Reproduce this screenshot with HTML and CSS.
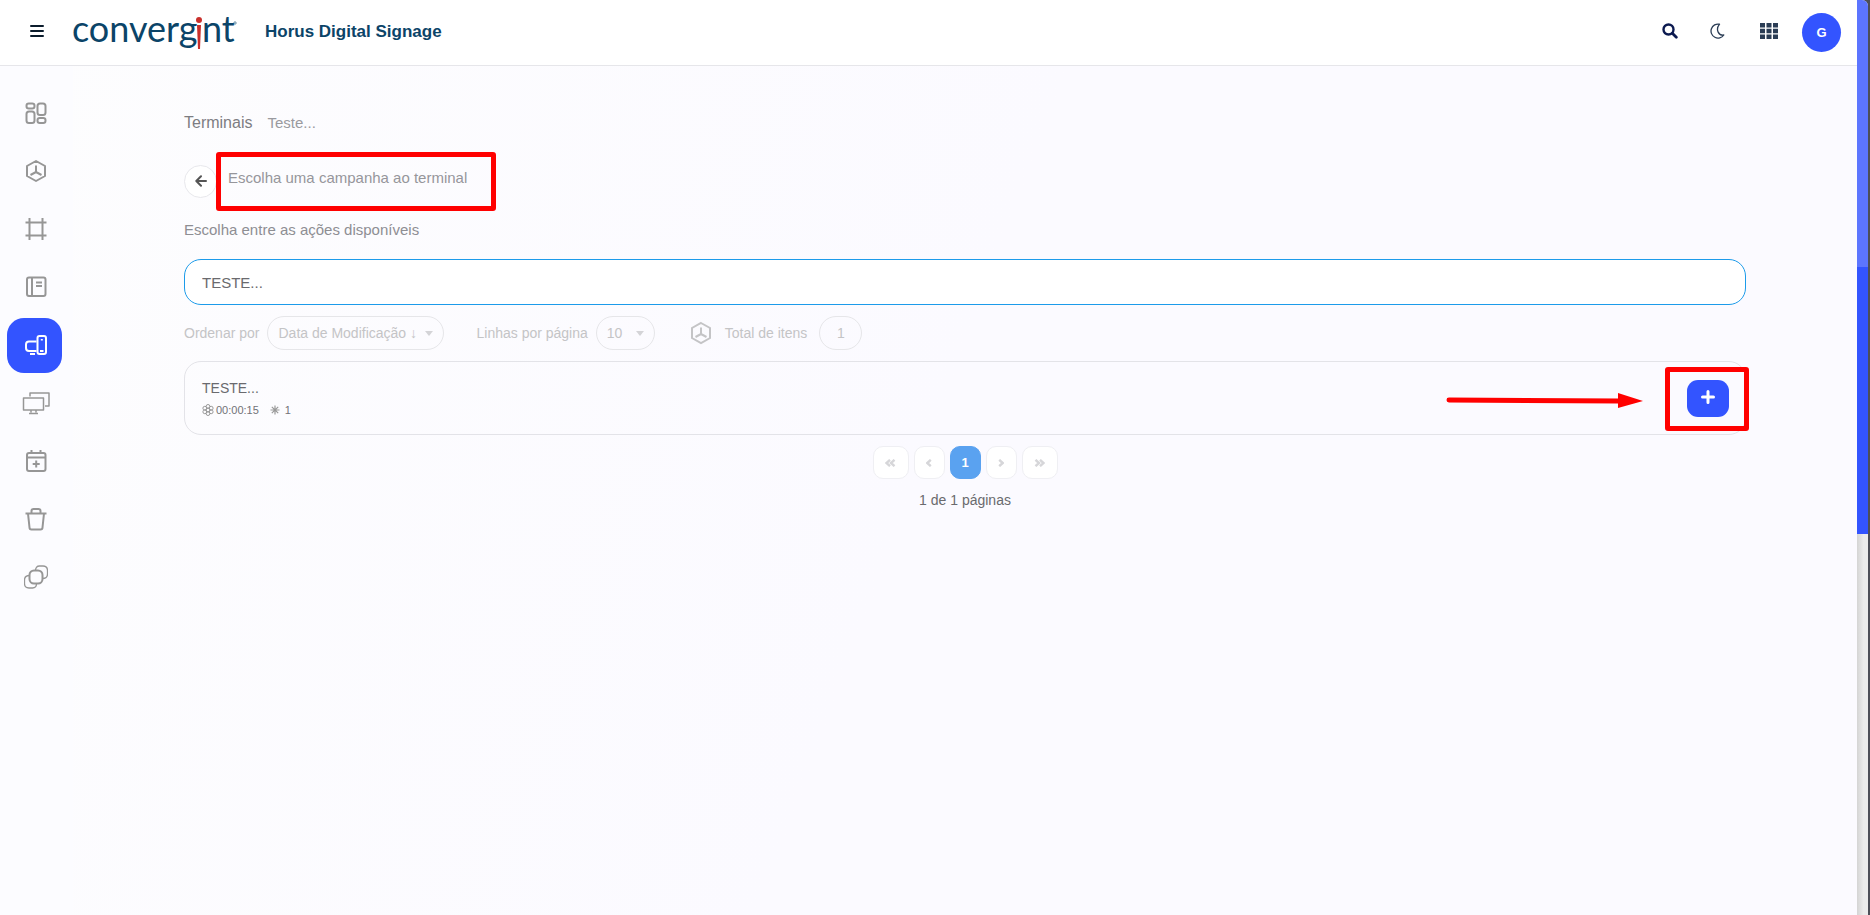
FILE: index.html
```html
<!DOCTYPE html>
<html lang="pt-br">
<head>
    <meta charset="UTF-8">
    <title>Horus Digital Signage</title>
    <meta name="viewport" content="width=device-width, initial-scale=1.0">
    <link rel="stylesheet" href="styles.css">
</head>
<body>
    <div class="page">
        <header class="topbar">
            <button type="button" class="icon-btn menu-btn" aria-label="Menu">
                <svg width="14" height="12" viewBox="0 0 14 12"><path d="M1 1h12M1 6h12M1 11h12" stroke="#0b1c2c" stroke-width="2" stroke-linecap="round"/></svg>
            </button>
            <a href="#" class="logo" aria-label="Convergint">
                <svg width="168" height="56" viewBox="0 0 168 56">
                    <text x="0" y="37" class="logo-text">converg</text>
                    <text x="130" y="37" class="logo-text">nt</text>
                    <circle cx="127" cy="15" r="3" fill="#c9302c"/>
                    <path d="M125 20h4l-1 24h-2z" fill="#c9302c"/>
                    <circle cx="163" cy="18" r="1.200" fill="none" stroke="#0b4468" stroke-width=".6"/>
                </svg>
            </a>
            <div class="app-name">Horus Digital Signage</div>
            <div class="topbar-actions">
                <button type="button" class="icon-btn" aria-label="Buscar">
                    <svg width="16" height="16" viewBox="0 0 16 16"><circle cx="6.5" cy="6.5" r="5" fill="none" stroke="#0c1a50" stroke-width="2.4"/><path d="M10.3 10.3l4 4" stroke="#0c1a50" stroke-width="2.8" stroke-linecap="round"/></svg>
                </button>
                <button type="button" class="icon-btn" aria-label="Tema escuro">
                    <svg width="16" height="16" viewBox="0 0 16 16"><path d="M10.500 1.200A7 7 0 1 0 14.800 12C10 13 6 7 10.500 1.200z" fill="none" stroke="#2b3d55" stroke-width="1.300" stroke-linejoin="round"/></svg>
                </button>
                <button type="button" class="icon-btn apps-btn" aria-label="Aplicativos">
                    <svg width="18" height="16" viewBox="0 0 18 16" fill="#2b3d55"><path d="M0 0h5v4.500H0zM6.500 0h5v4.500h-5zM13 0h5v4.500h-5zM0 5.800h5v4.500H0zM6.500 5.800h5v4.500h-5zM13 5.800h5v4.500h-5zM0 11.500h5V16H0zM6.500 11.500h5V16h-5zM13 11.500h5V16h-5z"/></svg>
                </button>
                <button type="button" class="avatar">G</button>
            </div>
        </header>

        <div class="layout">
            <nav class="sidebar">
                <a href="#" aria-label="Painel">
                    <svg viewBox="0 0 24 24"><rect x="2.500" y="2.500" width="8" height="5" rx="2.300"/><rect x="2.500" y="10.500" width="8" height="11.500" rx="2.500"/><rect x="13.500" y="2.500" width="8" height="11.500" rx="2.500"/><rect x="13.500" y="17" width="8" height="5" rx="2.300"/></svg>
                </a>
                <a href="#" aria-label="Campanhas">
                    <svg viewBox="0 0 24 24"><path d="M12 2l9 5v10l-9 5-9-5V7zM12 6.500V13M12 13l-5.500 3M12 13l5.500 3"/></svg>
                </a>
                <a href="#" aria-label="Quadros">
                    <svg viewBox="0 0 24 24"><path d="M5.500 1v22M18.500 1v22M1.500 5.500h21M1.500 18.500h21"/></svg>
                </a>
                <a href="#" aria-label="Modelos">
                    <svg viewBox="0 0 24 24"><rect x="3" y="2.500" width="18.500" height="18.500" rx="2"/><path d="M8 3v18M12 7.500h6M12 11h6"/></svg>
                </a>
                <a href="#" class="active" aria-label="Terminais">
                    <svg viewBox="0 0 24 24"><path d="M12.500 8.500H5a3 3 0 0 0-3 3V15a3 3 0 0 0 3 3h7.500M6 21h5"/><rect x="13.500" y="3" width="8.500" height="18" rx="2"/><path d="M17.800 6v1.500M16 18h3.500"/></svg>
                </a>
                <a href="#" aria-label="Telas">
                    <svg class="wide" viewBox="0 0 28 24"><path d="M8 5.500V2h19v13h-4M1.500 7h20v12h-20zM9 19v2.500M14 19v2.500M7 22.500h9"/></svg>
                </a>
                <a href="#" aria-label="Agenda">
                    <svg viewBox="0 0 24 24"><rect x="3" y="4" width="18.500" height="18" rx="2"/><path d="M3 8.500h18.500M7.500 1v3M16.500 1v3M12.200 11.500v7M8.700 15h7"/></svg>
                </a>
                <a href="#" aria-label="Lixeira">
                    <svg viewBox="0 0 24 24"><path d="M1.500 6.500h21M4 6.500l1.500 14a2 2 0 0 0 2 2h9a2 2 0 0 0 2-2L20 6.500M7.500 6V4a2 2 0 0 1 2-2h5a2 2 0 0 1 2 2v2"/></svg>
                </a>
                <a href="#" aria-label="Grupos">
                    <svg class="thin" viewBox="0 0 24 24"><path d="M11.500 5.500c0-3 1.500-4.500 4-4.500h3.500c3 0 4.500 1.500 4.500 4.500V9c0 3-2 4.500-5 4.500M12.500 18.500c0 3-1.500 4.500-4 4.500H5c-3 0-4.500-1.500-4.500-4.500V15c0-3 2-4.500 5-4.500"/><rect x="5.500" y="5.500" width="13" height="13" rx="4.500" stroke-width="2"/></svg>
                </a>
            </nav>

            <main class="content">
                <div class="breadcrumb">
                    <a href="#">Terminais</a>
                    <span>Teste...</span>
                </div>

                <div class="title-row">
                    <button type="button" class="back-btn" aria-label="Voltar">
                        <svg width="12" height="12" viewBox="0 0 12 12"><path d="M11 6H1.500M6 1.300L1.300 6 6 10.700" fill="none" stroke="#555" stroke-width="2" stroke-linecap="round" stroke-linejoin="round"/></svg>
                    </button>
                    <div class="title">Escolha uma campanha ao terminal
                        <span class="mark mark-title"></span>
                    </div>
                </div>

                <label class="subtitle" for="search">Escolha entre as ações disponíveis</label>
                <input type="text" id="search" class="search" value="TESTE...">

                <div class="filters">
                    <label for="order">Ordenar por</label>
                    <div class="select order">
                        <select id="order">
                            <option>Data de Modificação ↓</option>
                        </select>
                    </div>
                    <label for="rows">Linhas por página</label>
                    <div class="select rows">
                        <select id="rows">
                            <option>10</option>
                        </select>
                    </div>
                    <svg class="total-icon" viewBox="0 0 24 24"><path d="M12 2l9 5v10l-9 5-9-5V7zM12 6.500V13M12 13l-5.500 3M12 13l5.500 3"/></svg>
                    <span>Total de itens</span>
                    <span class="total">1</span>
                </div>

                <div class="card">
                    <div>
                        <div class="card-name">TESTE...</div>
                        <div class="card-meta">
                            <svg width="12" height="12" viewBox="0 0 12 12" fill="none" stroke="#999" stroke-width="1"><circle cx="6" cy="6" r="2"/><circle cx="6" cy="2.400" r="1.900"/><circle cx="9.200" cy="4.200" r="1.900"/><circle cx="9.200" cy="7.800" r="1.900"/><circle cx="6" cy="9.600" r="1.900"/><circle cx="2.800" cy="7.800" r="1.900"/><circle cx="2.800" cy="4.200" r="1.900"/></svg>
                            <span class="time">00:00:15</span>
                            <svg width="10" height="10" viewBox="0 0 10 10" stroke="#999" stroke-width="1.200"><path d="M5 .5v9M.5 5h9M1.800 1.800l6.400 6.400M8.200 1.800L1.800 8.200"/></svg>
                            <span class="count">1</span>
                        </div>
                    </div>
                    <button type="button" class="add-btn" aria-label="Adicionar">
                        <svg width="14" height="14" viewBox="0 0 14 14"><path d="M7 1.500v11M1.500 7h11" stroke="#fff" stroke-width="3" stroke-linecap="round"/></svg>
                    </button>
                    <span class="mark mark-add"></span>
                    <svg class="arrow" width="198" height="16" viewBox="0 0 198 16"><path d="M3 7l170 1" stroke="#f00" stroke-width="5" stroke-linecap="round"/><path d="M172 0l25 8-25 7z" fill="#f00"/></svg>
                </div>

                <div class="pagination">
                    <button type="button" class="edge" aria-label="Primeira"><svg width="11" height="8" viewBox="0 0 11 8"><path d="M5 .8L1.500 4 5 7.200M9.500 .8L6 4l3.500 3.200"/></svg></button>
                    <button type="button" aria-label="Anterior"><svg width="6" height="8" viewBox="0 0 6 8"><path d="M4.800 .8L1.300 4l3.500 3.200"/></svg></button>
                    <button type="button" class="current">1</button>
                    <button type="button" aria-label="Próxima"><svg width="6" height="8" viewBox="0 0 6 8"><path d="M1.200 .8L4.700 4 1.200 7.200"/></svg></button>
                    <button type="button" class="edge" aria-label="Última"><svg width="11" height="8" viewBox="0 0 11 8"><path d="M1.500 .8L5 4 1.500 7.200M6 .8L9.500 4 6 7.200"/></svg></button>
                </div>
                <div class="page-info">1 de 1 páginas</div>
            </main>
        </div>
    </div>

    <!-- barra de rolagem -->
    <div class="scrollbar">
        <div class="thumb"></div>
    </div>
</body>
</html>
```
FILE: styles.css
```css
* {
    box-sizing: border-box;
}
body {
    margin: 0;
    min-height: 100vh;
    display: flex;
    background: #4d4f58;
    font-family: 'Liberation Sans', Arial, sans-serif;
    font-size: 14px;
    color: #8e8e93;
}
button {
    border: none;
    padding: 0;
    font-family: inherit;
    cursor: pointer;
    display: flex;
    align-items: center;
    justify-content: center;
}
a {
    color: inherit;
    text-decoration: none;
}
.page {
    flex: 1;
    display: flex;
    flex-direction: column;
    background: linear-gradient(110deg, #fdfdfe 0%, #fbfaff 50%);
}

/* Topo */
.topbar {
    display: flex;
    align-items: center;
    height: 66px;
    padding: 0 16px 0 18px;
    background: #fff;
    border-bottom: 1px solid #e6e6ea;
}
.icon-btn {
    width: 38px;
    height: 38px;
    padding-bottom: 4px;
    background: none;
}
.logo {
    margin-left: 16px;
}
.logo svg {
    display: block;
}
.logo-text {
    font-family: Lato, sans-serif;
    font-size: 36px;
    fill: #0b4468;
}
.app-name {
    margin-left: 25px;
    padding-bottom: 2px;
    font-size: 17px;
    font-weight: bold;
    color: #0b4468;
}
.topbar-actions {
    display: flex;
    align-items: center;
    gap: 9px;
    margin-left: auto;
}
.apps-btn {
    margin-left: 5px;
}
.avatar {
    width: 39px;
    height: 39px;
    margin-left: 5px;
    border-radius: 50%;
    background: #3354ff;
    color: #fff;
    font-size: 13px;
    font-weight: bold;
}

/* Menu lateral */
.layout {
    flex: 1;
    display: flex;
}
.sidebar {
    width: 73px;
    padding: 20px 0 0 7px;
    display: flex;
    flex-direction: column;
    gap: 3px;
    background: #fcfcff;
}
.sidebar a {
    width: 55px;
    height: 55px;
    padding: 0 0 2px 3px;
    border-radius: 17px;
    display: flex;
    align-items: center;
    justify-content: center;
}
.sidebar svg {
    width: 24px;
    height: 24px;
    fill: none;
    stroke: #969696;
    stroke-width: 2;
    stroke-linejoin: round;
}
.sidebar svg.wide {
    width: 28px;
    stroke-width: 1.5;
}
.sidebar svg.thin {
    stroke-width: 1.3;
}
.sidebar .active {
    background: #3354ff;
}
.sidebar .active svg {
    stroke: #fff;
}

/* Conteúdo */
.content {
    flex: 1;
    padding: 47px 111px 20px;
}
.breadcrumb {
    display: flex;
    align-items: center;
    gap: 15px;
    line-height: 20px;
    font-size: 15px;
    color: #9a9a9f;
}
.breadcrumb a {
    font-size: 16px;
    color: #7d7d82;
}
.title-row {
    display: flex;
    gap: 11px;
    margin-top: 32px;
}
.back-btn {
    width: 33px;
    height: 33px;
    padding-bottom: 2px;
    border: 1px solid #e8e8ec;
    border-radius: 50%;
    background: #fff;
}
.title {
    position: relative;
    height: 26px;
    line-height: 26px;
    font-size: 15px;
    color: #96969b;
}
.mark {
    position: absolute;
    border: 5px solid #f00;
    border-radius: 3px;
    pointer-events: none;
}
.mark-title {
    left: -12px;
    top: -13px;
    width: 280px;
    height: 59px;
}
.subtitle {
    display: block;
    margin-top: 22px;
    line-height: 20px;
    font-size: 15px;
    color: #8e8e93;
}
.search {
    display: block;
    width: 100%;
    height: 46px;
    margin-top: 19px;
    padding: 0 17px;
    border: 1px solid #1c9bea;
    border-radius: 17px;
    background: #fff;
    font-family: inherit;
    font-size: 15px;
    color: #6a6a6e;
    outline: none;
}
.filters {
    display: flex;
    align-items: center;
    margin-top: 11px;
    color: #c4c4c6;
}
.select {
    position: relative;
    margin: 0 32px 0 8px;
}
.select select {
    width: 100%;
    height: 34px;
    padding: 0 10px;
    border: 1px solid #e6e6e9;
    border-radius: 17px;
    appearance: none;
    background: transparent;
    font-family: inherit;
    font-size: 14px;
    color: #c4c4c6;
}
.select::after {
    content: "";
    position: absolute;
    right: 11px;
    top: 15px;
    border: 4px solid transparent;
    border-top: 5px solid #d4d4d7;
    border-bottom: none;
    pointer-events: none;
}
.order {
    width: 177px;
}
.rows {
    width: 59px;
}
.total-icon {
    width: 24px;
    height: 24px;
    margin: 0 12px 0 2px;
    fill: none;
    stroke: #c4c4c6;
    stroke-width: 2;
}
.total {
    width: 43px;
    margin-left: 12px;
    border: 1px solid #e6e6e9;
    border-radius: 17px;
    line-height: 32px;
    text-align: center;
}
.card {
    position: relative;
    display: flex;
    align-items: center;
    justify-content: space-between;
    height: 74px;
    margin-top: 11px;
    padding: 0 16px 0 17px;
    border: 1px solid #e3e3e8;
    border-radius: 17px;
}
.card-name {
    line-height: 20px;
    color: #6a6a6e;
}
.card-meta {
    display: flex;
    align-items: center;
    margin-top: 4px;
    line-height: 16px;
    font-size: 11px;
    color: #727277;
}
.time {
    margin: 0 11px 0 2px;
}
.count {
    margin-left: 5px;
}
.add-btn {
    width: 42px;
    height: 37px;
    padding-bottom: 2px;
    border-radius: 11px;
    background: #3354ff;
}
.mark-add {
    right: -4px;
    top: 5px;
    width: 84px;
    height: 64px;
}
.arrow {
    position: absolute;
    right: 101px;
    top: 31px;
}

/* Paginação */
.pagination {
    display: flex;
    justify-content: center;
    gap: 5px;
    margin-top: 11px;
}
.pagination button {
    width: 31px;
    height: 33px;
    border: 1px solid #efeff3;
    border-radius: 10px;
    background: #fff;
}
.pagination .edge {
    width: 36px;
}
.pagination .current {
    border-color: #5aa2f0;
    background: #5aa2f0;
    color: #fff;
    font-size: 13px;
    font-weight: bold;
}
.pagination svg {
    fill: none;
    stroke: #d6d6d9;
    stroke-width: 2.4;
}
.page-info {
    margin-top: 11px;
    line-height: 20px;
    text-align: center;
    color: #6a6a6e;
}

/* Rolagem */
.scrollbar {
    width: 11px;
    margin-right: 2px;
    border-top-right-radius: 6px;
    overflow: hidden;
    background: linear-gradient(90deg, #d4d4d4, #ececec 60%);
}
.thumb {
    height: 534px;
    background: linear-gradient(#5c75ff 50%, #3354ff 50%);
}
```
